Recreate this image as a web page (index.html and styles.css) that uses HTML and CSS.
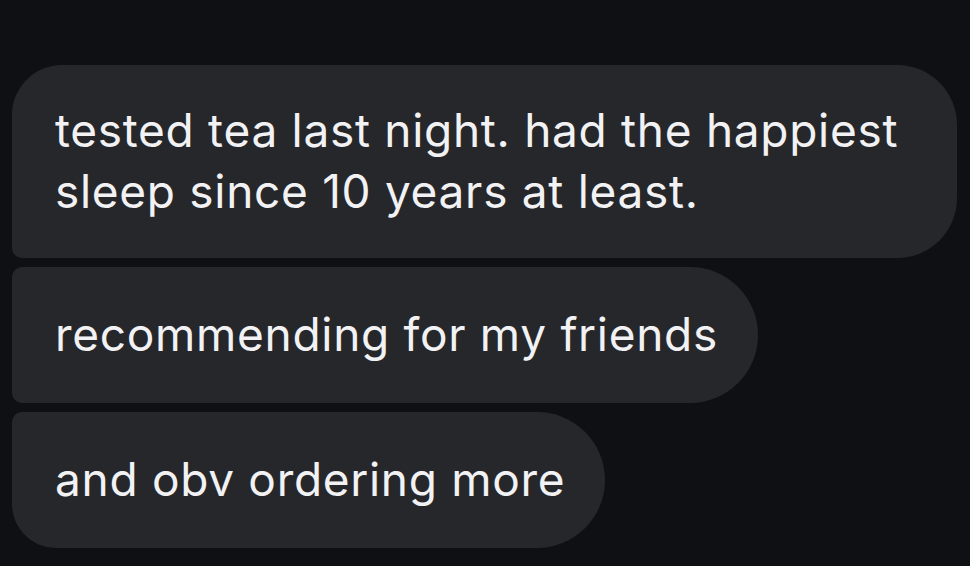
FILE: index.html
```html
<!DOCTYPE html>
<html lang="en">
<head>
<meta charset="utf-8">
<link rel="stylesheet" href="styles.css">
<title>Messages</title>
</head>
<body>
<div class="thread">
  <div class="bubble first">tested tea last night. had the happiest sleep since 10 years at least.</div>
  <div class="bubble middle">recommending for my friends</div>
  <div class="bubble last">and obv ordering more</div>
</div>
</body>
</html>
```
FILE: styles.css
```css
html, body {
  margin: 0;
  padding: 0;
  background: #0f1014;
  height: 100%;
  overflow: hidden;
}
.thread {
  display: flex;
  flex-direction: column;
  align-items: flex-start;
  gap: 9px;
  padding: 65px 0 0 12px;
}
.bubble {
  background: #26272b;
  color: #f2f2f4;
  font-family: Inter, "Noto Sans", sans-serif;
  font-size: 46px;
  letter-spacing: 0.7px;
  line-height: 61px;
  padding: 37px 40px 38px 43px;
  box-sizing: border-box;
}
.first {
  width: 945px;
  border-radius: 50px 60px 60px 10px;
  padding-top: 35px;
  padding-bottom: 36px;
}
.middle {
  border-radius: 10px 68px 68px 10px;
}
.last {
  border-radius: 10px 68px 68px 44px;
}
```
